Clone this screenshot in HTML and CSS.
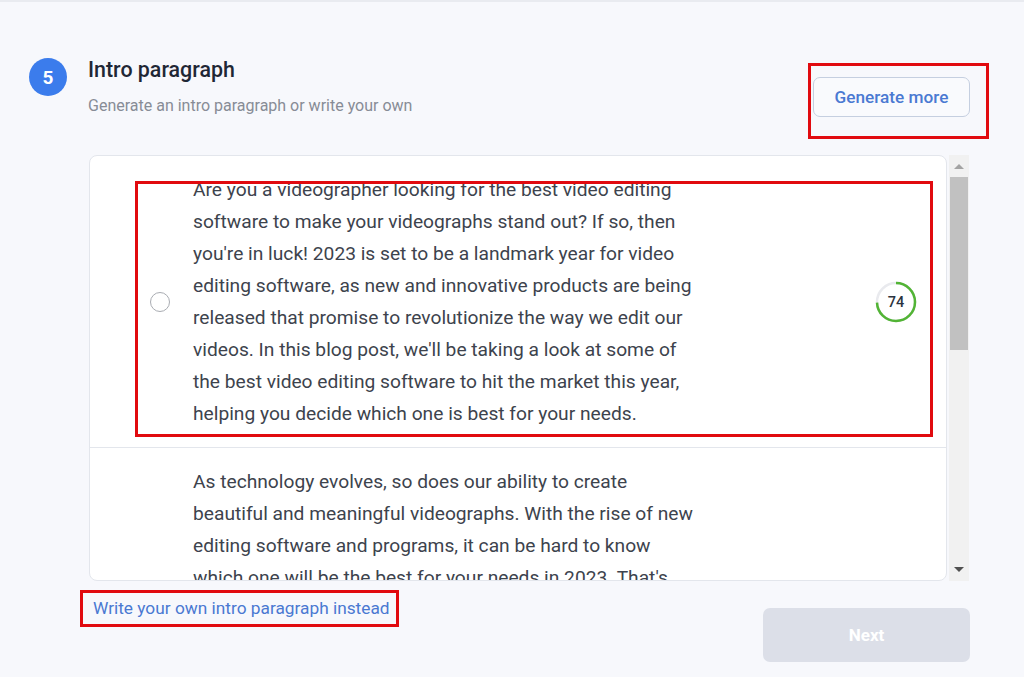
FILE: index.html
```html
<!DOCTYPE html>
<html>
<head>
<meta charset="utf-8">
<link rel="stylesheet" href="styles.css">
</head>
<body>
<div class="page">
  <div class="header">
    <div class="step">
      <div class="badge">5</div>
      <div class="titles">
        <div class="title">Intro paragraph</div>
        <div class="subtitle">Generate an intro paragraph or write your own</div>
      </div>
    </div>
    <button class="btn-outline">Generate more</button>
  </div>

  <div class="list-wrap">
    <div class="card">
      <div class="item first">
        <span class="radio"></span>
        <p class="text">Are you a videographer looking for the best video editing software to make your videographs stand out? If so, then you're in luck! 2023 is set to be a landmark year for video editing software, as new and innovative products are being released that promise to revolutionize the way we edit our videos. In this blog post, we'll be taking a look at some of the best video editing software to hit the market this year, helping you decide which one is best for your needs.</p>
        <div class="score">
          <svg width="44" height="44" viewBox="0 0 44 44">
            <circle cx="22" cy="22" r="19" fill="none" stroke="#e9eaee" stroke-width="2.5"/>
            <circle cx="22" cy="22" r="19" fill="none" stroke="#52b435" stroke-width="2.5" stroke-dasharray="88.3 119.4" transform="rotate(-90 22 22)"/>
          </svg>
          <span class="score-num">74</span>
        </div>
      </div>
      <div class="item second">
        <span class="radio hidden"></span>
        <p class="text">As technology evolves, so does our ability to create beautiful and meaningful videographs. With the rise of new editing software and programs, it can be hard to know which one will be the best for your needs in 2023. That's why we've put together this list of the best video editing software for videographers.</p>
      </div>
    </div>
    <div class="scrollbar">
      <div class="arrow up"></div>
      <div class="thumb"></div>
      <div class="track-rest"></div>
      <div class="arrow down"></div>
    </div>
  </div>

  <div class="footer">
    <a class="link" href="#">Write your own intro paragraph instead</a>
    <button class="btn-next">Next</button>
  </div>
</div>

<div class="mark mark-gen"></div>
<div class="mark mark-item"></div>
<div class="mark mark-link"></div>
</body>
</html>
```

FILE: styles.css
```css
* { box-sizing: border-box; }
html, body { margin: 0; padding: 0; }
body {
  background: #f7f8fc;
  font-family: Roboto, "Liberation Sans", sans-serif;
  width: 1024px;
  height: 677px;
  overflow: hidden;
  position: relative;
  border-top: 2px solid #e9ebf0;
}
.page {
  padding: 54px 54px 0 29px;
}
.header {
  display: flex;
  justify-content: space-between;
  align-items: flex-start;
}
.step {
  display: flex;
  align-items: flex-start;
}
.badge {
  width: 38px;
  height: 38px;
  border-radius: 50%;
  background: #3b7cec;
  color: #fff;
  font-weight: 700;
  font-size: 19px;
  display: flex;
  align-items: center;
  justify-content: center;
  margin-top: 2px;
}
.titles { margin-left: 21px; }
.title {
  font-size: 21.4px;
  line-height: 28px;
  color: #1f2735;
  font-weight: 500;
}
.subtitle {
  margin-top: 11px;
  font-size: 16px;
  line-height: 21px;
  color: #878c96;
}
.btn-outline {
  margin-top: 21px;
  width: 157px;
  height: 40px;
  background: #f9fafd;
  border: 1px solid #c5cfe0;
  border-radius: 7px;
  color: #4a79d2;
  font-family: Roboto, "Liberation Sans", sans-serif;
  font-size: 17.2px;
  font-weight: 500;
  padding: 0;
}
.list-wrap {
  margin-top: 38px;
  margin-left: 60px;
  display: flex;
  height: 426px;
}
.card {
  width: 858px;
  height: 426px;
  background: #fff;
  border: 1px solid #e3e6ec;
  border-radius: 8px;
  overflow: hidden;
}
.item {
  display: flex;
  align-items: center;
  padding: 18px 28px 18px 60px;
  border-bottom: 1px solid #e3e6ec;
}
.item.first { padding-top: 18px; padding-bottom: 17px; }
.radio {
  width: 20px;
  height: 20px;
  border: 1px solid #a9acb2;
  border-radius: 50%;
  flex: none;
}
.radio.hidden { visibility: hidden; }
.text {
  margin: 0 0 0 23px;
  width: 506px;
  font-size: 19.2px;
  line-height: 32px;
  color: #3d434d;
}
.score {
  margin-left: auto;
  position: relative;
  width: 44px;
  height: 44px;
}
.score svg { display: block; }
.score-num {
  position: absolute;
  inset: 0;
  display: flex;
  align-items: center;
  justify-content: center;
  font-size: 14.5px;
  font-weight: 500;
  color: #2c3340;
}
.scrollbar {
  margin-left: 2px;
  width: 20px;
  background: #f1f1f1;
  display: flex;
  flex-direction: column;
  align-items: center;
}
.arrow {
  width: 0;
  height: 0;
  border-left: 5px solid transparent;
  border-right: 5px solid transparent;
  margin: 9px 0 8px;
}
.arrow.up { border-bottom: 5px solid #a3a3a3; }
.arrow.down { border-top: 5px solid #505050; margin: 6px 0 9px; }
.thumb {
  width: 18px;
  height: 173px;
  background: #c1c1c1;
}
.track-rest { flex: 1; }
.footer {
  display: flex;
  justify-content: space-between;
  align-items: flex-start;
  margin-top: 17px;
}
.link {
  margin-left: 64px;
  color: #4a79d2;
  font-size: 17.3px;
  line-height: 21px;
  text-decoration: none;
}
.btn-next {
  margin-top: 10px;
  width: 207px;
  height: 54px;
  background: #dcdfe8;
  border: none;
  border-radius: 7px;
  color: #fff;
  font-family: Roboto, "Liberation Sans", sans-serif;
  font-size: 17px;
  font-weight: 700;
}
.mark {
  position: absolute;
  border: 3px solid #e10a0f;
  pointer-events: none;
}
.mark-gen { left: 808px; top: 61px; width: 181px; height: 76px; }
.mark-item { left: 135px; top: 179px; width: 798px; height: 256px; }
.mark-link { left: 80px; top: 588px; width: 319px; height: 37px; }
```
